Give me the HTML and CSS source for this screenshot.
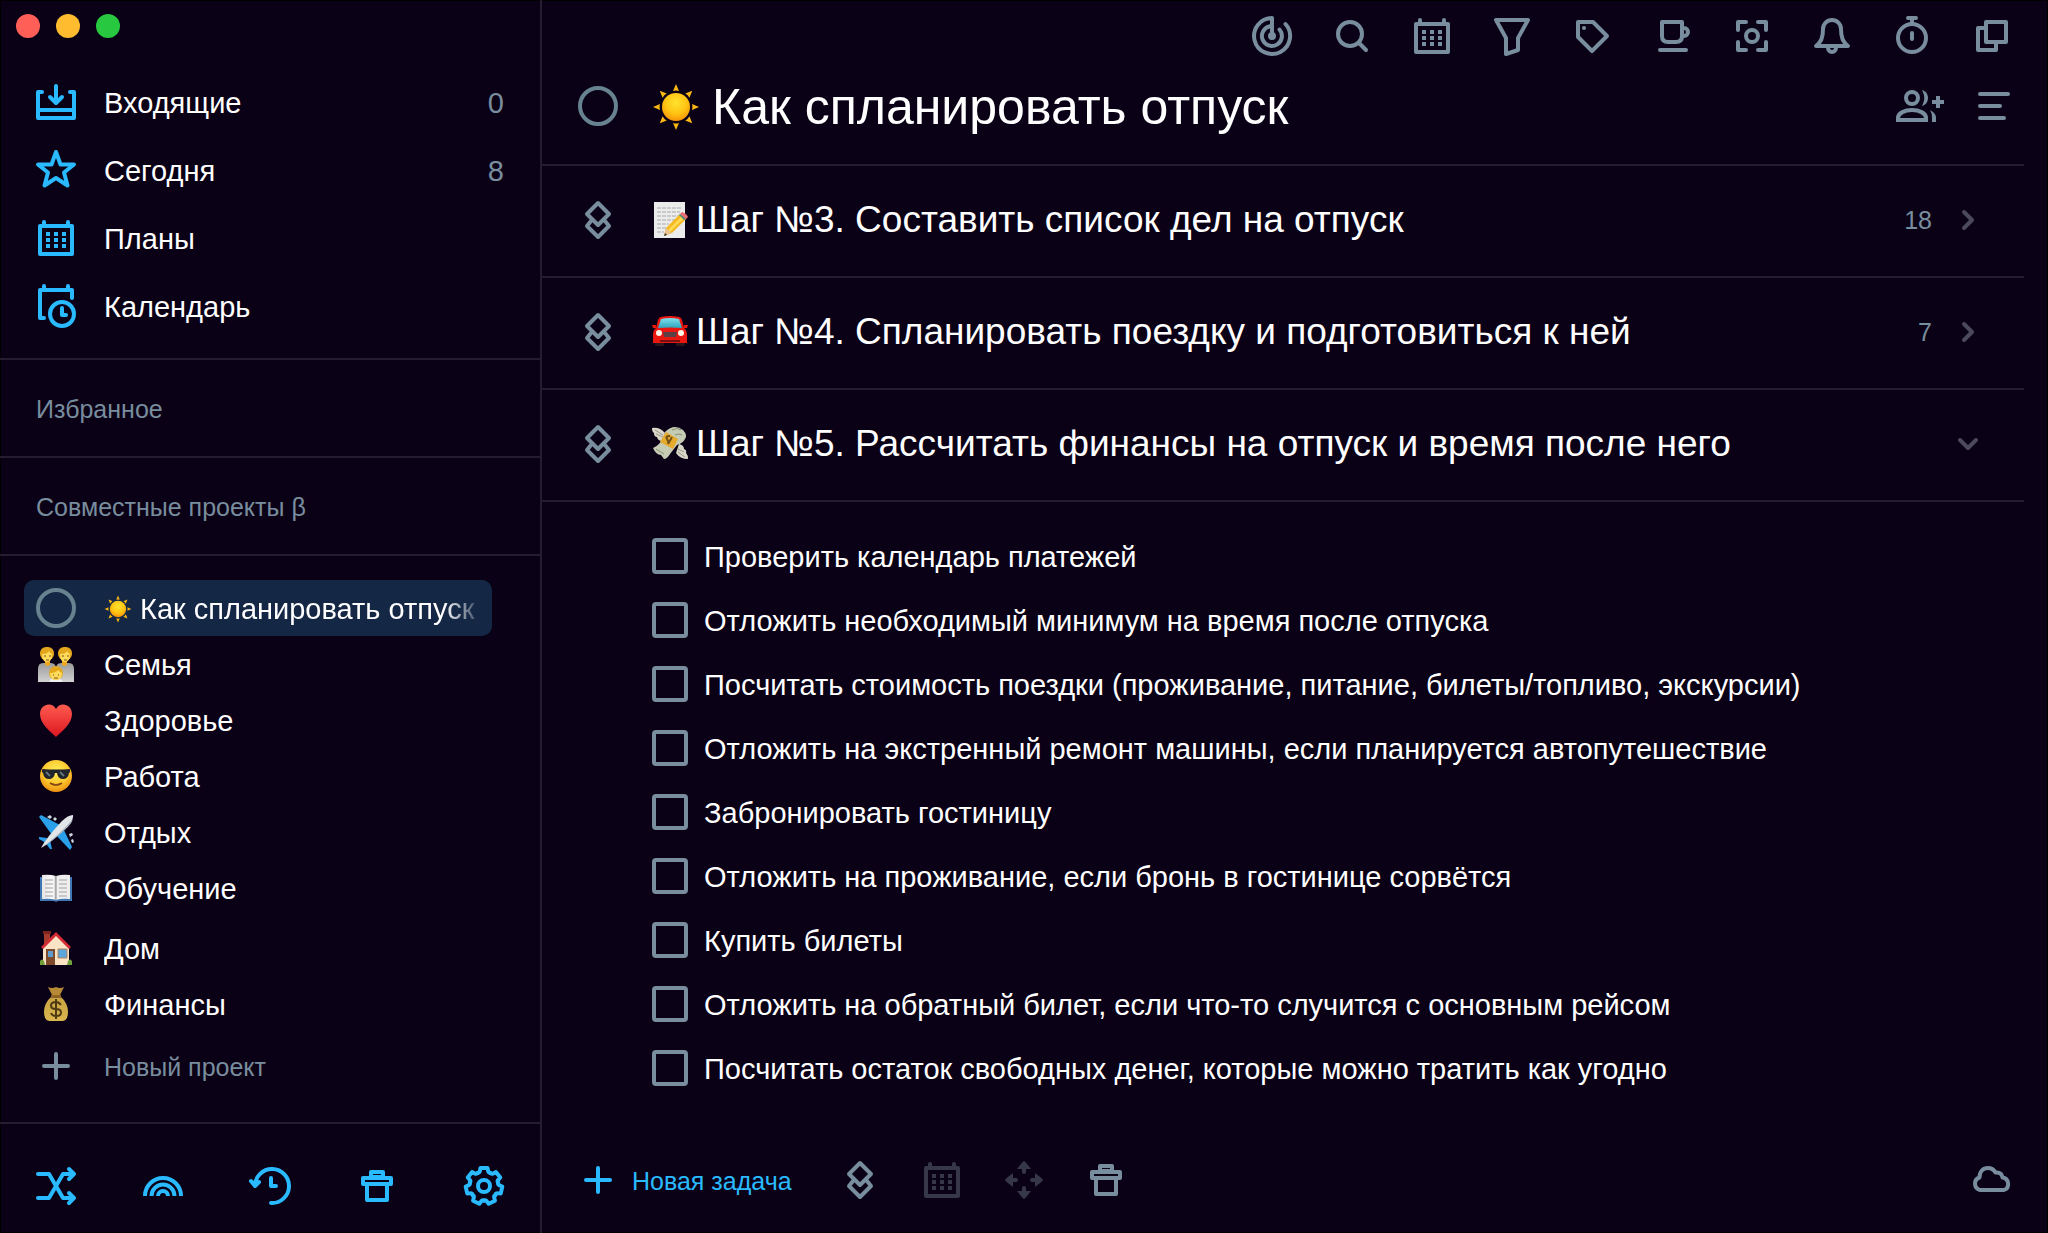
FILE: index.html
```html
<!DOCTYPE html>
<html lang="ru">
<head>
<meta charset="utf-8">
<meta name="viewport" content="width=device-width, initial-scale=1">
<title>Как спланировать отпуск</title>
<link rel="stylesheet" href="styles.css">
</head>
<body>
<svg class="sprite" aria-hidden="true">
  <defs>
    <radialGradient id="g-sun" cx=".5" cy=".35" r=".65"><stop offset="0" stop-color="#ffe32e"/><stop offset=".6" stop-color="#ffc312"/><stop offset="1" stop-color="#f79408"/></radialGradient>
    <radialGradient id="g-face" cx=".5" cy=".35" r=".65"><stop offset="0" stop-color="#ffee58"/><stop offset=".6" stop-color="#fdc92f"/><stop offset="1" stop-color="#ee9012"/></radialGradient>
    <linearGradient id="g-heart" x2="0" y2="1"><stop offset="0" stop-color="#ff5c50"/><stop offset="1" stop-color="#dc1620"/></linearGradient>
    <linearGradient id="g-body" x2="0" y2="1"><stop offset="0" stop-color="#9a9a9a"/><stop offset="1" stop-color="#d2d2d2"/></linearGradient>
    <linearGradient id="g-bag" x2="0" y2="1"><stop offset="0" stop-color="#c8a243"/><stop offset="1" stop-color="#d9b64e"/></linearGradient>
    <linearGradient id="g-glass" x2="0" y2="1"><stop offset="0" stop-color="#7fe0ec"/><stop offset="1" stop-color="#2fa5bd"/></linearGradient>
    <linearGradient id="g-page" x2="1" y2="0"><stop offset="0" stop-color="#e6e6e6"/><stop offset=".8" stop-color="#fafafa"/><stop offset="1" stop-color="#bdbdbd"/></linearGradient>
  </defs>
  <symbol id="i-calendar" viewBox="0 0 40 40"><path d="M4 8H36V36H4ZM8 4V8M32 4V8"/><path class="dots" d="M10 14h4v4h-4zM18 14h4v4h-4zM26 14h4v4h-4zM10 20h4v4h-4zM18 20h4v4h-4zM26 20h4v4h-4zM10 26h4v4h-4zM18 26h4v4h-4zM26 26h4v4h-4z"/></symbol>
  <symbol id="i-stack" viewBox="0 0 40 40"><path d="M20 3L31 14 20 25 9 14ZM13 21L9 26 20 37 31 26 27 21"/></symbol>
  <symbol id="i-trash" viewBox="0 0 40 40"><path d="M6 12H34V18H6ZM14 12V6H26V12M10 18V34H30V18"/><path d="M16 10H24" stroke-width="2"/></symbol>
  <symbol id="i-plus" viewBox="0 0 40 40"><path d="M20 8V32M8 20H32"/></symbol>
  <symbol id="i-right" viewBox="0 0 40 40"><path d="M16 12l8 8-8 8"/></symbol>
  <symbol id="i-down" viewBox="0 0 40 40"><path d="M12 16l8 8 8-8"/></symbol>
  <symbol id="e-sun" viewBox="0 0 48 48"><circle cx="24" cy="24" r="14" fill="url(#g-sun)"/><g id="rays" fill="#fcb813"><path id="ray" d="M24 1l3 7q-3-1-6 0z"/><use href="#ray" transform="rotate(45 24 24)"/><use href="#ray" transform="rotate(90 24 24)"/><use href="#ray" transform="rotate(135 24 24)"/><use href="#ray" transform="rotate(180 24 24)"/><use href="#ray" transform="rotate(225 24 24)"/><use href="#ray" transform="rotate(270 24 24)"/><use href="#ray" transform="rotate(315 24 24)"/></g></symbol>
</svg>

<div class="window">
  <aside class="sidebar">
    <div class="lights">
      <button class="light light-close" aria-label="Закрыть"></button>
      <button class="light light-min" aria-label="Свернуть"></button>
      <button class="light light-max" aria-label="Развернуть"></button>
    </div>

    <nav class="nav">
      <a class="nav-row" href="#inbox">
        <svg class="icon" viewBox="0 0 40 40"><path d="M6 10H2V36H38V10H34M2 28H38M20 4V20M14 15l6 6 6-6"/></svg>
        <span>Входящие</span><span class="nav-count">0</span>
      </a>
      <a class="nav-row" href="#today">
        <svg class="icon" viewBox="0 0 40 40"><path d="M20 2L24.500 14.500H38L28 22.500 31.500 35.500 20 28 8.500 35.500 12 22.500 2 14.500H15.500Z"/></svg>
        <span>Сегодня</span><span class="nav-count">8</span>
      </a>
      <a class="nav-row" href="#plans">
        <svg class="icon"><use href="#i-calendar"/></svg>
        <span>Планы</span>
      </a>
      <a class="nav-row" href="#calendar">
        <svg class="icon" viewBox="0 0 40 40"><path d="M8 32H4V4H36V12M8 0V4M32 0V4"/><circle cx="26" cy="28" r="12"/><path d="M26 22V29H30"/></svg>
        <span>Календарь</span>
      </a>
    </nav>

    <h2 class="group">Избранное</h2>
    <h2 class="group">Совместные проекты β</h2>

    <div class="projects">
      <ul class="project-list">
        <li><a class="project is-active" href="#vacation"><span class="slot"><span class="ring"></span></span><span class="project-name fade"><svg class="emoji-s" role="img" aria-label="☀️"><use href="#e-sun"/></svg>Как спланировать отпуск</span></a></li>
        <li><a class="project" href="#family"><span class="slot"><svg class="emoji" viewBox="0 0 36 36" role="img" aria-label="👪"><path d="M0 36V23q0-6 5-6h8q5 0 5 6v13zM18 36V23q0-6 5-6h8q5 0 5 6v13z" fill="url(#g-body)"/><path d="M7 13h5v6q-2 2-5 0zM24 13h5v6q-2 2-5 0z" fill="#eaa820"/><rect x="2" y="1" width="14" height="13" rx="6" fill="#e3a61c"/><rect x="20" y="1" width="14" height="13" rx="6" fill="#e3a61c"/><path d="M4 8q6 0 7-3 1 2 3 3 0 8-5 8T4 8zM22 8q6 0 7-3 1 2 3 3 0 8-5 8t-5-8z" fill="#ffdb5c"/><path d="M6 10h2M11 10h2M24 10h2M29 10h2M8 14h3M26 14h3" stroke="#805018"/><path d="M12 36v-2q6-4 12 0v2z" fill="#f0f0f0"/><circle cx="18" cy="27" r="7" fill="#e3a61c"/><path d="M12 27q6 0 8-3 2 2 4 3 0 7-6 7t-6-7z" fill="#ffdb5c"/><path d="M15 29h1M20 29h1M16 32h4" stroke="#805018"/></svg></span><span class="project-name">Семья</span></a></li>
        <li><a class="project" href="#health"><span class="slot"><svg class="emoji" viewBox="0 0 36 36" role="img" aria-label="❤️"><path d="M18 35C12 29 2 22 2 12 2 2 14-1 18 7c4-8 16-5 16 5 0 10-10 17-16 23z" fill="url(#g-heart)"/></svg></span><span class="project-name">Здоровье</span></a></li>
        <li><a class="project" href="#work"><span class="slot"><svg class="emoji" viewBox="0 0 36 36" role="img" aria-label="😎"><circle cx="18" cy="18" r="16" fill="url(#g-face)"/><path d="M4 11q14 1 28 0v3l-1 1q-1 6-6 6-5 0-6-6h-2q-1 6-6 6-5 0-6-6l-1-1z" fill="#20252c"/><path d="M8 14l4 4M22 14l4 4" stroke="#67717d" stroke-width="2"/><path d="M12 25q6 4 12 0" stroke="#8a4a10" stroke-width="2" fill="none"/></svg></span><span class="project-name">Работа</span></a></li>
        <li><a class="project" href="#rest"><span class="slot"><svg class="emoji" viewBox="0 0 36 36" role="img" aria-label="✈️"><path d="M22 11L3 1 1 3l13 18zM25 14l9 19-2 3-15-16zM9 24l-8-1v2l7 4zM12 26l2 9h-2l-5-7z" fill="#2aa0ea"/><path d="M9 3l3-2 2 2-2 2zM15 5l2-2 2 2-2 2zM31 20l3-1 1 2-3 2zM33 26l2-1 1 3-2 1z" fill="#cfd6dc"/><path d="M3 34Q8 24 24 7q6-6 11-6 1 4-5 11Q14 28 3 34z" fill="#e3e6e8"/><path d="M3 34Q20 22 35 5q-1 4-5 8Q14 28 3 34z" fill="#a9b1b8"/></svg></span><span class="project-name">Отдых</span></a></li>
        <li><a class="project" href="#study"><span class="slot"><svg class="emoji" viewBox="0 0 36 36" role="img" aria-label="📖"><path d="M2 7h32v24H20l-2 1-2-1H2z" fill="#3f77b5"/><path d="M4 5q8-1 14 1v24q-6-2-14-1z" fill="url(#g-page)"/><path d="M32 5q-8-1-14 1v24q6-2 14-1z" fill="#eee"/><path d="M7 10h8M7 14h8M7 18h8M7 22h8M21 10h8M21 14h8M21 18h8M21 22h8M7 26h8M21 26h8" stroke="#a2a2a2"/><path d="M18 6v24" stroke="#8a8a8a"/></svg></span><span class="project-name">Обучение</span></a></li>
      </ul>
      <ul class="project-list">
        <li><a class="project" href="#home"><span class="slot"><svg class="emoji" viewBox="0 0 36 36" role="img" aria-label="🏠"><path d="M6 2h6v12H6z" fill="#a33a2c"/><path d="M5 1h8v3H5z" fill="#7d251c"/><path d="M5 17L18 4l13 13v18H5z" fill="#fbe3c6"/><path d="M3 17L18 2l15 15-2 2L18 6 5 19z" fill="#d62c35"/><path d="M8 19h9v16H8z" fill="#7d4a2b"/><path d="M10 21h5v6h-5z" fill="#5d9ccd"/><path d="M20 19h9v9h-9z" fill="#5ba4dc" stroke="#b3845c"/><path d="M2 35v-4q2-3 4 0l1 4zM34 35v-4q-2-3-4 0l-1 4z" fill="#6fa03a"/></svg></span><span class="project-name">Дом</span></a></li>
        <li><a class="project" href="#finance"><span class="slot"><svg class="emoji" viewBox="0 0 36 36" role="img" aria-label="💰"><path d="M10 1q4 2 8 0 4 2 8 0l-4 8h-8z" fill="#b98a35"/><path d="M14 10h8q8 7 8 16t-6 9H12q-6 0-6-9t8-16z" fill="url(#g-bag)"/><path d="M13 9h10v3H13z" fill="#8d6424"/><path d="M23 19q-2-3-5-3-5 0-5 3.500T18 23t5 3.500-5 3.500q-4 0-5-3M18 13v20" fill="none" stroke="#4d3a12" stroke-width="2"/></svg></span><span class="project-name">Финансы</span></a></li>
      </ul>
      <button class="project new-project"><span class="slot"><svg class="icon"><use href="#i-plus"/></svg></span><span class="project-name">Новый проект</span></button>
    </div>

    <footer class="sidebar-tools">
      <button class="tool" aria-label="Перемешать"><svg class="icon" viewBox="0 0 40 40"><path d="M2 8H13L27 32H36M2 32H13L27 8H36M33 3l5 5-5 5M33 27l5 5-5 5"/></svg></button>
      <button class="tool" aria-label="Радуга"><svg class="icon butt" viewBox="0 0 40 40"><path d="M2 30a18 18 0 0 1 36 0M8.500 30a11.500 11.500 0 0 1 23 0M15 30a5 5 0 0 1 10 0"/></svg></button>
      <button class="tool" aria-label="История"><svg class="icon" viewBox="0 0 40 40"><path d="M21 37A17 17 0 1 0 5 20M1 15L5 20 9 16M21 12V20H26"/></svg></button>
      <button class="tool" aria-label="Корзина"><svg class="icon"><use href="#i-trash"/></svg></button>
      <button class="tool" aria-label="Настройки"><svg class="icon" viewBox="-20 -20 40 40"><path id="tooth" d="M-6.300-13.100Q-4.400-13-4-15.500L-3.500-18H3.500L4-15.500Q4.400-13 6.300-13.100"/><use href="#tooth" transform="rotate(51.430)"/><use href="#tooth" transform="rotate(102.860)"/><use href="#tooth" transform="rotate(154.290)"/><use href="#tooth" transform="rotate(205.710)"/><use href="#tooth" transform="rotate(257.140)"/><use href="#tooth" transform="rotate(308.570)"/><circle r="6"/></svg></button>
    </footer>
  </aside>

  <main class="main">
    <div class="toolbar">
      <button class="tool" aria-label="Фокус"><svg class="icon" viewBox="0 0 40 40"><path d="M20 20V2A18 18 0 1 0 33.500 8M18 10.200A10 10 0 1 0 27.500 13.500"/><circle cx="20" cy="20" r="2"/></svg></button>
      <button class="tool" aria-label="Поиск"><svg class="icon" viewBox="0 0 40 40"><circle cx="18" cy="18" r="12"/><path d="M27 27l7 7"/></svg></button>
      <button class="tool" aria-label="Планы"><svg class="icon"><use href="#i-calendar"/></svg></button>
      <button class="tool" aria-label="Фильтр"><svg class="icon" viewBox="0 0 40 40"><path d="M4 4H36L26 22V34L14 38V22Z"/></svg></button>
      <button class="tool" aria-label="Метки"><svg class="icon" viewBox="0 0 40 40"><path d="M6 6H21L35 20 20 35 6 21Z"/><circle class="dots" cx="12" cy="12" r="2"/></svg></button>
      <button class="tool" aria-label="Перерыв"><svg class="icon" viewBox="0 0 40 40"><path d="M10 6H30V20Q30 26 24 26H16Q10 26 10 20ZM30 12h2a4 4 0 0 1 0 8h-2M8 34H34"/></svg></button>
      <button class="tool" aria-label="Во весь экран"><svg class="icon" viewBox="0 0 40 40"><path d="M6 14V6H14M26 6H34V14M34 26V34H26M14 34H6V26"/><circle cx="20" cy="20" r="6"/></svg></button>
      <button class="tool" aria-label="Уведомления"><svg class="icon" viewBox="0 0 40 40"><path d="M4 30C9 26 11 22 11 13A9 9 0 0 1 29 13C29 22 31 26 36 30ZM16 32a4 4 0 0 0 8 0"/></svg></button>
      <button class="tool" aria-label="Таймер"><svg class="icon" viewBox="0 0 40 40"><circle cx="20" cy="22" r="14"/><path d="M16 2H24M20 2V8M20 17V23"/></svg></button>
      <button class="tool" aria-label="Новое окно"><svg class="icon" viewBox="0 0 40 40"><path d="M14 6H34V26H14ZM14 12H6V34H24V26"/></svg></button>
    </div>

    <header class="title-row">
      <span class="ring"></span>
      <h1 class="title"><svg class="emoji-l" role="img" aria-label="☀️"><use href="#e-sun"/></svg>Как спланировать отпуск</h1>
      <button class="tool" aria-label="Пригласить"><svg class="icon icon-wide butt" viewBox="0 0 48 40"><circle cx="16" cy="12" r="6"/><path d="M2 34V32C2 27 9 24 16 24S30 27 30 32V34ZM36 16H48M42 10V22"/><path class="dots" d="M26 4C34 6 34 18 26 20 29 14 29 10 26 4ZM34 24Q40 27 40 32V36H36V32Q36 27 34 24Z"/></svg></button>
      <button class="tool" aria-label="Меню"><svg class="icon" viewBox="0 0 40 40"><path d="M8 8H36M8 20H28M8 32H32"/></svg></button>
    </header>

    <section class="step">
      <svg class="icon"><use href="#i-stack"/></svg>
      <h2 class="step-title"><svg class="emoji" viewBox="0 0 36 36" role="img" aria-label="📝"><path d="M2 0H33V36H2z" fill="#ececec"/><path d="M5 6h24M5 10h23M5 14h22M5 18h18M5 22h12M5 26h10M5 30h7" stroke="#a8a8a8" stroke-dasharray="4 1"/><path d="M12 34l2-8L28 12l6 5-14 14z" fill="#f5b921"/><path d="M16 28L30 14l2 2-14 14z" fill="#ffdc54"/><path d="M28 12l2-2q4 1 6 5l-3 3z" fill="#ef6d75"/><path d="M27 13l1-1 6 5-2 1z" fill="#4f8f78"/><path d="M12 34l2-8 6 5z" fill="#e9c08c"/><path d="M12 34l1-3 2 2z" fill="#333"/></svg>Шаг №3. Составить список дел на отпуск</h2>
      <span class="step-count">18</span>
      <button class="tool chevron" aria-label="Развернуть"><svg class="icon"><use href="#i-right"/></svg></button>
    </section>
    <section class="step">
      <svg class="icon"><use href="#i-stack"/></svg>
      <h2 class="step-title"><svg class="emoji" viewBox="0 0 36 36" role="img" aria-label="🚘"><path d="M3 26h9v5q0 1-2 1H5q-2 0-2-1zM24 26h9v5q0 1-2 1h-5q-2 0-2-1z" fill="#27171c"/><path d="M9 3q9-2 18 0 2 0 3 3l2 8q3 2 3 7v8H1v-8q0-5 3-7l2-8q1-3 3-3z" fill="#ea1610"/><path d="M0 11h4v3H1zM32 11h4l-1 3h-3z" fill="#ea1610"/><path d="M9 5q9-2 18 0l3 9q-12-1-24 0z" fill="url(#g-glass)"/><ellipse cx="7" cy="19" rx="3" ry="3" fill="#fff6e8"/><ellipse cx="29" cy="19" rx="3" ry="3" fill="#fff6e8"/><path d="M11 18h14l-1 5H12z" fill="#5b4145"/><path d="M8 27h20" stroke="#761010" stroke-width="2"/></svg>Шаг №4. Спланировать поездку и подготовиться к ней</h2>
      <span class="step-count">7</span>
      <button class="tool chevron" aria-label="Развернуть"><svg class="icon"><use href="#i-right"/></svg></button>
    </section>
    <section class="step">
      <svg class="icon"><use href="#i-stack"/></svg>
      <h2 class="step-title"><svg class="emoji" viewBox="0 0 36 36" role="img" aria-label="💸"><path d="M0 2q8-1 13 5l-3 8q-4 0-5-4-3 0-3-4-2-1-2-5zM36 33q-8 0-12-6l3-9q5 1 5 5 3 1 2 4 2 2 2 6z" fill="#d9d8c8"/><path d="M3 4l8 5M4 8l7 3M33 31l-7-5M32 26l-6-3" stroke="#96968a"/><path d="M13 6Q22-3 31 4q5 5 2 9-2 4-8 6l-7 9q-3 5-6 5l-3-4q-5 0-8-7 7-3 9-9z" fill="#c6cbb3"/><path d="M20 4q5-3 9 0M23 9q3-2 7 0M4 23l8 5" stroke="#859073" fill="none"/><path d="M14 6l12 7-5 10-13-7z" fill="#e6aa2c"/><path d="M18 10q-5 0-3 3t1 5M20 11l-4 7" stroke="#71501a" stroke-width="2" fill="none"/></svg>Шаг №5. Рассчитать финансы на отпуск и время после него</h2>
      <button class="tool chevron" aria-label="Свернуть"><svg class="icon"><use href="#i-down"/></svg></button>
    </section>

    <ul class="tasks">
      <li><label class="task"><input type="checkbox"><span>Проверить календарь платежей</span></label></li>
      <li><label class="task"><input type="checkbox"><span>Отложить необходимый минимум на время после отпуска</span></label></li>
      <li><label class="task"><input type="checkbox"><span>Посчитать стоимость поездки (проживание, питание, билеты/топливо, экскурсии)</span></label></li>
      <li><label class="task"><input type="checkbox"><span>Отложить на экстренный ремонт машины, если планируется автопутешествие</span></label></li>
      <li><label class="task"><input type="checkbox"><span>Забронировать гостиницу</span></label></li>
      <li><label class="task"><input type="checkbox"><span>Отложить на проживание, если бронь в гостинице сорвётся</span></label></li>
      <li><label class="task"><input type="checkbox"><span>Купить билеты</span></label></li>
      <li><label class="task"><input type="checkbox"><span>Отложить на обратный билет, если что-то случится с основным рейсом</span></label></li>
      <li><label class="task"><input type="checkbox"><span>Посчитать остаток свободных денег, которые можно тратить как угодно</span></label></li>
    </ul>

    <footer class="bottom-bar">
      <button class="new-task"><svg class="icon"><use href="#i-plus"/></svg><span>Новая задача</span></button>
      <button class="tool" aria-label="Новый раздел"><svg class="icon"><use href="#i-stack"/></svg></button>
      <button class="tool" aria-label="Запланировать" disabled><svg class="icon"><use href="#i-calendar"/></svg></button>
      <button class="tool" aria-label="Переместить" disabled><svg class="icon" viewBox="0 0 40 40"><g id="move-arrow"><path class="dots" d="M20 1q1 0 7 8H13q6-8 7-8z"/><path d="M20 8V12"/></g><use href="#move-arrow" transform="rotate(90 20 20)"/><use href="#move-arrow" transform="rotate(180 20 20)"/><use href="#move-arrow" transform="rotate(270 20 20)"/></svg></button>
      <button class="tool" aria-label="Удалить"><svg class="icon"><use href="#i-trash"/></svg></button>
      <button class="tool cloud" aria-label="Синхронизация"><svg class="icon" viewBox="0 0 40 40"><path d="M8 30A6.500 6.500 0 0 1 7.500 17.500C7.500 11.500 11 8 16 8 20 8 22 10 23.500 12.500 28 12 30 14 30.500 17.500A6.500 6.500 0 0 1 32 30Z"/></svg></button>
    </footer>
  </main>
</div>
</body>
</html>
```
FILE: styles.css
```css
:root {
  --bg: #0b0117;
  --line: #241c30;
  --blue: #29baff;
  --muted: #788d9d;
  --dim: #363849;
  --active: #142745;
}

* { box-sizing: border-box; }

body {
  margin: 0;
  background: var(--bg);
  color: #fff;
  font: 29px/36px "Liberation Sans", Arial, sans-serif;
}

h1, h2, ul { margin: 0; padding: 0; font-weight: 400; }
ul { list-style: none; }
a { color: inherit; text-decoration: none; }
button { margin: 0; padding: 0; border: 0; background: none; color: inherit; font: inherit; text-align: left; }

.sprite { display: block; width: 0; height: 0; }

.window {
  display: grid;
  grid-template-columns: 542px minmax(0, 1fr);
  min-height: 100vh;
  box-shadow: inset 0 0 0 1px #000;
}

.icon {
  display: block;
  flex: none;
  width: 40px;
  height: 40px;
  overflow: visible;
  fill: none;
  stroke: currentColor;
  stroke-width: 4;
  stroke-linecap: round;
  stroke-linejoin: round;
}
.icon-wide { width: 48px; }
.butt { stroke-linecap: butt; stroke-linejoin: miter; }
.dots { fill: currentColor; stroke: none; }

.emoji { display: block; flex: none; width: 36px; height: 36px; }
.emoji-s { display: block; flex: none; width: 28px; height: 28px; }
.emoji-l { display: block; flex: none; width: 48px; height: 48px; }

.ring {
  display: block;
  flex: none;
  width: 40px;
  height: 40px;
  border: 4px solid #688390;
  border-radius: 50%;
}

/* Sidebar */
.sidebar {
  display: flex;
  flex-direction: column;
  border-right: 2px solid var(--line);
}
.lights { display: flex; gap: 16px; padding: 14px 16px 30px; }
.light { width: 24px; height: 24px; border-radius: 50%; }
.light-close { background: #ff5f57; }
.light-min { background: #febc2e; }
.light-max { background: #28c840; }

.nav { padding-bottom: 18px; border-bottom: 2px solid var(--line); }
.nav-row { display: flex; align-items: center; gap: 28px; height: 68px; padding: 0 36px; }
.nav-row span { padding-top: 2px; }
.nav-row .icon { color: var(--blue); }
.nav-count { margin-left: auto; color: var(--muted); }

.group {
  padding: 31px 36px 29px;
  border-bottom: 2px solid var(--line);
  color: var(--muted);
  font-size: 25px;
}

.projects { padding: 24px 48px 28px 24px; }
.project-list + .project-list { margin-top: 4px; }
.project { display: flex; align-items: center; gap: 28px; height: 56px; padding: 0 8px 0 12px; border-radius: 10px; }
.project.is-active { background: var(--active); }
.slot { display: flex; flex: none; justify-content: center; width: 40px; }
.project-name { display: flex; flex: 1; align-items: center; gap: 8px; min-width: 0; padding-top: 2px; overflow: hidden; white-space: nowrap; }
.fade {
  -webkit-mask-image: linear-gradient(to left, transparent, #000 40px);
  mask-image: linear-gradient(to left, transparent, #000 40px);
}
.new-project { width: 100%; margin-top: 6px; color: var(--muted); font-size: 25px; }

.sidebar-tools {
  display: flex;
  justify-content: space-between;
  margin-top: auto;
  padding: 42px 36px 27px;
  border-top: 2px solid var(--line);
  color: var(--blue);
}

/* Main pane */
.main { display: flex; flex-direction: column; min-width: 0; }
.toolbar { display: flex; justify-content: flex-end; gap: 40px; padding: 16px 36px 0; color: var(--muted); }

.title-row {
  display: flex;
  align-items: center;
  gap: 28px;
  height: 110px;
  margin-right: 24px;
  padding: 0 12px 8px 36px;
  border-bottom: 2px solid var(--line);
}
.title-row .tool { color: var(--muted); }
.title { display: flex; flex: 1; align-items: center; gap: 12px; padding: 2px 0 0 6px; font-size: 50px; line-height: 56px; }

.step {
  display: flex;
  align-items: center;
  height: 112px;
  margin-right: 24px;
  padding: 0 36px 2px;
  border-bottom: 2px solid var(--line);
  color: var(--muted);
}
.step-title { display: flex; flex: 1; align-items: center; gap: 8px; padding-left: 34px; color: #fff; font-size: 37px; line-height: 44px; }
.step-count { margin-right: 16px; font-size: 25px; }
.chevron { color: #4b4a5c; }

.tasks { padding: 22px 24px 22px 110px; }
.task { display: flex; align-items: center; gap: 16px; height: 64px; }
.task span { padding-top: 2px; }
.task input {
  flex: none;
  width: 36px;
  height: 36px;
  margin: 0;
  border: 4px solid #788d9d;
  border-radius: 4px;
  appearance: none;
}

.bottom-bar { display: flex; align-items: center; gap: 42px; margin-top: auto; padding: 0 36px 33px; color: var(--muted); }
.new-task { display: flex; align-items: center; gap: 14px; margin-right: 6px; color: var(--blue); font-size: 25px; }
.new-task span { padding-top: 2px; }
.tool:disabled { color: var(--dim); }
.cloud { margin-left: auto; }
```
